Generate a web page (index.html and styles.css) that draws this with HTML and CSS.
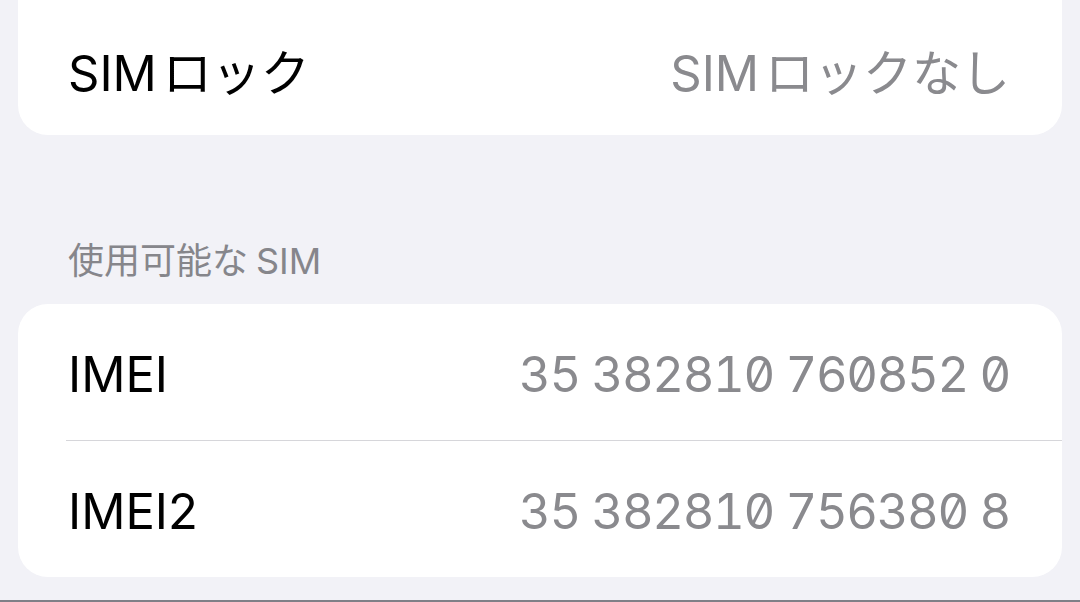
FILE: index.html
```html
<!DOCTYPE html>
<html lang="ja">
  <head>
    <meta charset="UTF-8" />
    <title>SIM情報</title>
    <link rel="stylesheet" href="styles.css">
  </head>
  <body>
    <div class="screen">
      <div class="group group-cut">
        <div class="row">
          <span class="label"><span class="latin">SIM</span>ロック</span>
          <span class="value"><span class="latin">SIM</span>ロックなし</span>
        </div>
      </div>

      <div class="section-title">使用可能な<span class="latin-before">SIM</span></div>

      <div class="group">
        <div class="row">
          <span class="label">IMEI</span>
          <span class="value mono">35 382810 760852 0</span>
        </div>
        <div class="divider"></div>
        <div class="row">
          <span class="label">IMEI2</span>
          <span class="value mono">35 382810 756380 8</span>
        </div>
      </div>
    </div>
    <div class="home-bar"></div>
  </body>
</html>
```

FILE: styles.css
```css
body {
  margin: 0;
  background: #f2f2f7;
  font-family: "Inter", "Noto Sans CJK JP", sans-serif;
  color: #000;
  height: 602px;
  overflow: hidden;
  display: flex;
  flex-direction: column;
}
.screen {
  flex: 1;
}
.group {
  background: #fff;
  margin: 0 18px;
  border-radius: 30px;
}
.group-cut {
  border-radius: 0 0 30px 30px;
}
.row {
  height: 136px;
  box-sizing: border-box;
  padding: 5px 52px 0 50px;
  display: flex;
  align-items: center;
  justify-content: space-between;
  font-size: 49px;
}
.group-cut .row {
  height: 135px;
  padding-top: 4px;
}
.latin {
  margin-right: 0.12em;
}
.latin-before {
  margin-left: 0.22em;
}
.label {
  color: #000;
}
.value {
  color: #8a8a8e;
}
.mono {
  font-variant-numeric: tabular-nums slashed-zero;
  letter-spacing: -1.4px;
}
.divider {
  height: 1px;
  background: #d6d6da;
  margin-left: 48px;
}
.section-title {
  font-size: 36px;
  line-height: 44px;
  color: #86868b;
  padding: 104px 0 0 68px;
  margin-bottom: 21px;
}
.home-bar {
  height: 2px;
  background: #7f7f87;
}
```
